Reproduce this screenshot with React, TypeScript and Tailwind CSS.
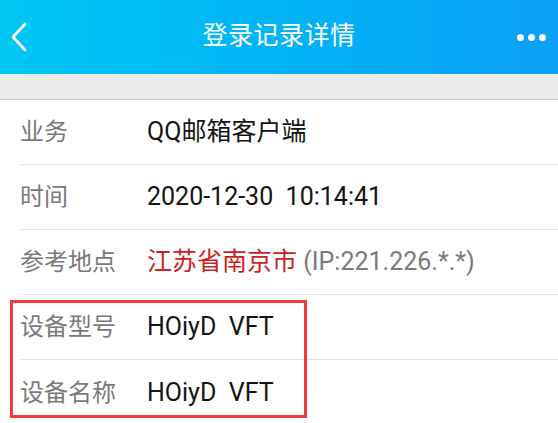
import React from "react";

const font = { fontFamily: "Roboto, 'Noto Sans CJK SC', 'Noto Sans', sans-serif" };

function Row({ label, children, last }: { label: string; children: React.ReactNode; last?: boolean }) {
  return (
    <div className={`ml-[20px] flex h-[65px] items-center ${last ? "" : "border-b border-[#e3e3e3]"}`}>
      <div className="w-[127px] shrink-0 text-[24px] text-[#7a7a7a]">{label}</div>
      <div className="text-[25px] text-[#141414] whitespace-pre">{children}</div>
    </div>
  );
}

export default function App() {
  return (
    <div className="relative h-[423px] w-[558px] overflow-hidden bg-white" style={font}>
      <div className="grid h-[74px] grid-cols-[1fr_auto_1fr] items-center bg-gradient-to-r from-[#00c7f4] to-[#0ba0f7] px-[11px]">
        <div className="flex">
          <svg width="16" height="30" viewBox="0 0 16 30">
            <path d="M14 2 L2 15 L14 28" fill="none" stroke="white" strokeWidth="2.6" strokeLinecap="round" strokeLinejoin="round" />
          </svg>
        </div>
        <div className="text-[25px] text-white tracking-[0.5px] pb-[2px]">登录记录详情</div>
        <div className="flex justify-end gap-[4px] pr-[1px]">
          <span className="h-[7px] w-[7px] rounded-full bg-white" />
          <span className="h-[7px] w-[7px] rounded-full bg-white" />
          <span className="h-[7px] w-[7px] rounded-full bg-white" />
        </div>
      </div>
      <div className="h-[26px] border-b border-[#d2d2d2] bg-[#ebebeb]" />
      <Row label="业务">QQ邮箱客户端</Row>
      <Row label="时间">2020-12-30  10:14:41</Row>
      <Row label="参考地点">
        <span className="text-[#cc1f1f]">江苏省南京市</span>
        <span className="text-[#7a7a7a]"> (IP:221.226.*.*)</span>
      </Row>
      <Row label="设备型号">HOiyD  VFT</Row>
      <Row label="设备名称" last>HOiyD  VFT</Row>
      <div className="absolute left-[10px] top-[300px] h-[118px] w-[297px] border-[3px] border-[#f23a3a]" />
    </div>
  );
}
